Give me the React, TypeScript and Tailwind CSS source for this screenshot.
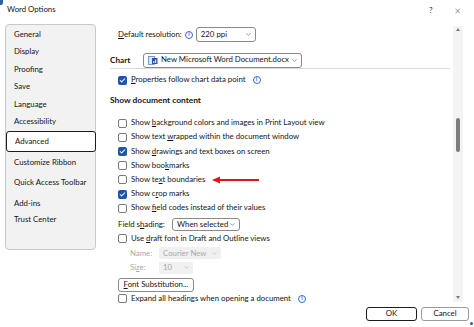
import { ChevronDown, Check } from 'lucide-react';

const font = { fontFamily: 'Lato, "Noto Sans", sans-serif' };

const navTop = ['General', 'Display', 'Proofing', 'Save', 'Language', 'Accessibility'];

const Info = () => (
  <span className="inline-flex items-center justify-center w-[8px] h-[8px] rounded-full border border-[#2a6fd6] text-[5.5px] leading-none text-[#2a6fd6] font-bold ml-[3px]">
    i
  </span>
);

const Box = ({ checked }: { checked?: boolean }) =>
  checked ? (
    <span className="flex items-center justify-center w-[9px] h-[9px] rounded-[2px] bg-[#1e56a8] shrink-0">
      <Check size={7} strokeWidth={3.5} color="#fff" />
    </span>
  ) : (
    <span className="block w-[9px] h-[9px] rounded-[2px] border border-[#7a7a7a] bg-white shrink-0" />
  );

const Row = ({ checked, children }: { checked?: boolean; children: React.ReactNode }) => (
  <div className="flex items-center h-[14.2px] gap-[4px]">
    <Box checked={checked} />
    <span>{children}</span>
  </div>
);

const U = ({ children }: { children: React.ReactNode }) => <span className="underline underline-offset-1">{children}</span>;

export default function App() {
  return (
    <div className="relative w-[474px] h-[327px] bg-white text-[7.8px] text-[#141414] overflow-hidden whitespace-nowrap" style={font}>
      {/* window corner bits */}
      <span className="absolute left-0 top-0 w-[3px] h-[5px] rounded-br-[2px] bg-[#2f5fa8]" />
      <span className="absolute left-[470px] top-[322px] w-[3px] h-[3px] rounded-full bg-[#2f5fa8]" />

      {/* Title bar */}
      <div className="flex items-center h-[24px] pl-[7px] pr-[13px] pb-[4px]">
        <span className="text-[7.8px]">Word Options</span>
        <span className="ml-auto text-[8px] text-[#333]">?</span>
        <span className="ml-[22px] text-[11px] leading-none text-[#333] font-light">×</span>
      </div>

      {/* Body */}
      <div className="flex h-[280px]">
        {/* Left nav */}
        <div className="ml-[5px] w-[91px] h-[226px] bg-[#f2f2f2] border border-[#c9c9c9] rounded-[4px] pt-[1px]">
          {navTop.map((n) => (
            <div key={n} className="h-[17.5px] flex items-center pl-[8px]">{n}</div>
          ))}
          <div className="h-[21px] flex items-center pl-[8px] bg-white border-[1.5px] border-[#1c1c1c] rounded-[3px] -mr-px">Advanced</div>
          <div className="h-[21px] flex items-center pl-[8px]">Customize Ribbon</div>
          <div className="h-[20px] flex items-center pl-[8px]">Quick Access Toolbar</div>
          <div className="h-[17px] flex items-center pl-[8px] mt-[2px]">Add-ins</div>
          <div className="h-[16px] flex items-center pl-[8px]">Trust Center</div>
        </div>

        {/* Content */}
        <div className="ml-[4px] w-[350px] pl-[10px]">
          <div className="flex items-center h-[15px] mt-[3px] pl-[8px]">
            <span><U>D</U>efault resolution:</span>
            <Info />
            <div className="ml-[3px] w-[60px] h-[15px] border border-[#8a8a8a] rounded-[3px] flex items-center pl-[4px] pr-[3px]">
              <span>220 ppi</span>
              <ChevronDown size={7} className="ml-auto" color="#555" />
            </div>
          </div>

          <div className="flex items-center h-[16px] mt-[11px] w-[340px] border-b border-[#dadada] pb-px">
            <span className="font-bold w-[33px] text-[8.2px]">Chart</span>
            <div className="w-[159px] h-[15px] border border-[#8a8a8a] rounded-[3px] flex items-center pl-[4px] pr-[3px]">
              <svg width="10" height="9" viewBox="0 0 10 9" className="mr-[3px]">
                <rect x="0.5" y="0.5" width="6" height="8" fill="#dbe8f7" stroke="#5b86c4" strokeWidth="0.8" />
                <rect x="4" y="2" width="5.5" height="6" fill="#2b579a" />
                <rect x="5.3" y="5" width="1" height="2" fill="#fff" />
                <rect x="7.2" y="3.6" width="1" height="3.4" fill="#fff" />
              </svg>
              <span>New Microsoft Word Document.docx</span>
              <ChevronDown size={7} className="ml-auto" color="#555" />
            </div>
          </div>

          <div className="flex items-center h-[14px] mt-[4px] pl-[8px] gap-[4px]">
            <Box checked />
            <span><U>P</U>roperties follow chart data point</span>
            <Info />
          </div>

          <div className="flex items-center h-[14px] mt-[6px] font-bold text-[8.4px]">Show document content</div>

          <div className="mt-[9px] pl-[8px]">
            <Row>Show <U>b</U>ackground colors and images in Print Layout view</Row>
            <Row>Show text <U>w</U>rapped within the document window</Row>
            <Row checked>Show <U>d</U>rawings and text boxes on screen</Row>
            <Row>Show boo<U>k</U>marks</Row>
            <div className="flex items-center h-[14.2px] gap-[4px]">
              <Box />
              <span>Show te<U>x</U>t boundaries</span>
              <svg width="47" height="8" viewBox="0 0 47 8" className="ml-[3px]">
                <path d="M7 4 H47" stroke="#e0141e" strokeWidth="1.8" />
                <path d="M0 4 L8 0.5 L8 7.5 Z" fill="#e0141e" />
              </svg>
            </div>
            <Row checked>Show c<U>r</U>op marks</Row>
            <Row>Show <U>f</U>ield codes instead of their values</Row>

            <div className="flex items-center h-[14px] mt-[2.6px]">
              <span className="w-[54px]">Field s<U>h</U>ading:</span>
              <div className="w-[68px] h-[13px] border border-[#8a8a8a] rounded-[3px] flex items-center pl-[4px] pr-[3px]">
                <span>When selected</span>
                <ChevronDown size={7} className="ml-auto" color="#555" />
              </div>
            </div>
            <div className="flex items-center h-[14px] gap-[4px]">
              <Box />
              <span>Use <U>d</U>raft font in Draft and Outline views</span>
            </div>
            <div className="flex items-center h-[13px] mt-[1px] pl-[12px] text-[#a8a8a8]">
              <span className="w-[29px]">Name:</span>
              <div className="w-[62px] h-[12px] bg-[#f0f0f0] rounded-[2px] flex items-center pl-[4px] pr-[3px]">
                <span>Courier New</span>
                <ChevronDown size={7} className="ml-auto" color="#b5b5b5" />
              </div>
            </div>
            <div className="flex items-center h-[12px] mt-[2px] pl-[12px] text-[#a8a8a8]">
              <span className="w-[29px]">Si<U>z</U>e:</span>
              <div className="w-[34px] h-[12px] bg-[#f0f0f0] rounded-[2px] flex items-center pl-[4px] pr-[3px]">
                <span>10</span>
                <ChevronDown size={7} className="ml-auto" color="#b5b5b5" />
              </div>
            </div>
            <div className="mt-[4px] w-[76px] h-[14px] border border-[#8a8a8a] rounded-[3px] flex items-center justify-center">
              <span><U>F</U>ont Substitution...</span>
            </div>
            <div className="flex items-center h-[14px] gap-[4px]">
              <Box />
              <span>Expand all headings when opening a document</span>
              <Info />
            </div>
          </div>
        </div>

        {/* Scrollbar */}
        <div className="ml-[3px] mt-[2px] w-[10px] h-[276px] bg-[#f4f4f4] flex flex-col items-center">
          <span className="mt-[2px] w-0 h-0 border-l-[2.5px] border-r-[2.5px] border-b-[3px] border-l-transparent border-r-transparent border-b-[#7a7a7a]" />
          <span className="mt-[87px] w-[4px] h-[34px] rounded-full bg-[#7d7d7d]" />
          <span className="mt-auto mb-[3px] w-0 h-0 border-l-[2.5px] border-r-[2.5px] border-t-[3px] border-l-transparent border-r-transparent border-t-[#7a7a7a]" />
        </div>
      </div>

      {/* Footer */}
      <div className="flex pl-[366px] pt-[3px] gap-[4px]">
        <div className="w-[51px] h-[14px] border-[1.5px] border-[#1c1c1c] rounded-[3px] flex items-center justify-center">OK</div>
        <div className="w-[48px] h-[14px] border border-[#9a9a9a] rounded-[3px] flex items-center justify-center">Cancel</div>
      </div>
    </div>
  );
}
